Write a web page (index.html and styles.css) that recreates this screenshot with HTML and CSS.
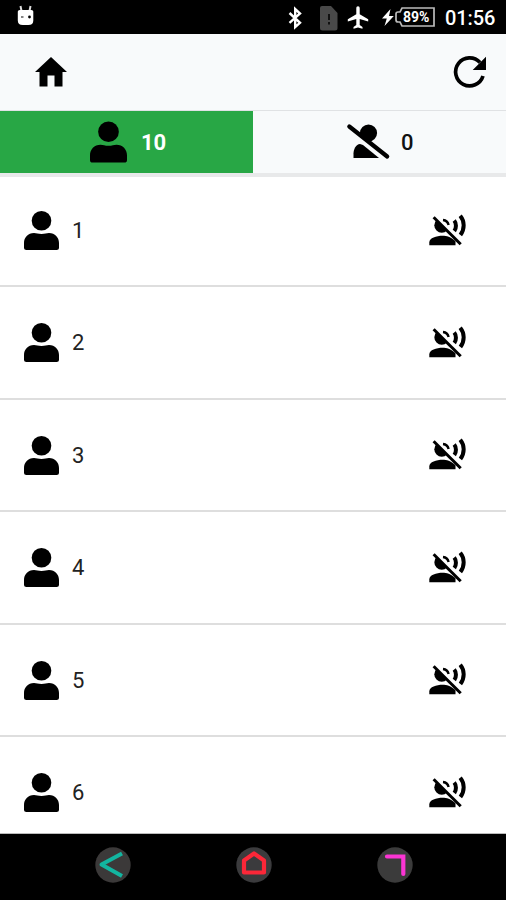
FILE: index.html
```html
<!DOCTYPE html>
<html lang="en">
<head>
<meta charset="utf-8">
<title>Participants</title>
<link rel="stylesheet" href="styles.css">
</head>
<body>
<svg class="symbols" aria-hidden="true">
  <symbol id="person" viewBox="0 0 35 39">
    <circle cx="17.5" cy="9.8" r="9.8"/>
    <path d="M10 22c2.500 0 4 1 7.500 1s5-1 7.500-1c6 0 10 4.500 10 10v4.500q0 2.500-2.500 2.500h-30q-2.500 0-2.500-2.500v-4.500c0-5.500 4-10 10-10z"/>
  </symbol>
  <symbol id="muted" viewBox="0 0 38 34">
    <path d="M7.500 6 18 16.500A7.200 7.200 0 0 1 7.500 6z"/>
    <path d="M14 6c2.800.3 5 2.300 5.600 5" class="stroke-thin"/>
    <path d="M.3 31.300v-2.800c0-4.500 7-6.700 13.500-6.700 3.500 0 8 .8 12.700 5.500v4z"/>
    <path d="M4.600 3.300 31.700 30.300" class="stroke-slash"/>
    <path d="M25.200 6.500c2.300 2.800 2.300 7.500.1 10.500" class="stroke-wave"/>
    <path d="M31.200 1.700c4.600 5.500 4.600 13.300.2 19.300" class="stroke-wave"/>
  </symbol>
</svg>
<div class="screen">
  <div class="status">
    <svg class="robot" viewBox="0 0 18 22"><path d="M3.500 1l1 5M13.500 1l-1 5" stroke="#ddd" stroke-width="2"/><path d="M.8 6.500q0-1.500 2-1.500h11.500q2 0 2 1.500v9q0 4.500-5 4.500H5.800q-5 0-5-4.500z" fill="#fff"/><path d="M4 12h2.500" stroke="#777" stroke-width="1.800"/><circle cx="12.500" cy="12" r="1.400"/></svg>
    <svg class="bluetooth" viewBox="0 0 14 22"><path d="M1.500 6 12 15.800 7.200 20V2L12 6.500 1.500 15.800" fill="none" stroke="#fff" stroke-width="2.400"/></svg>
    <svg class="sim" viewBox="0 0 18 25"><path d="M2 0h9l6.500 7v15q0 2.500-2.500 2.500H2.500Q0 24.500 0 22V2Q0 0 2 0z" fill="#494949"/><path d="M9 8v6M9 16v2.500" stroke="#111" stroke-width="2"/></svg>
    <svg class="plane" viewBox="0 0 22 23"><path d="M11 .3c1.100 0 1.700.9 1.700 2v6l8.500 4.900v2.300l-8.500-2.500v6l2.800 2v1.700L11 21.600l-4.500 1.100V21l2.800-2v-6L.8 15.500v-2.300l8.500-4.900v-6c0-1.100.6-2 1.700-2z" fill="#fff"/></svg>
    <svg class="bolt" viewBox="0 0 12 17"><path d="M8.500 0 0 9.500h4.800L2.500 17 11.800 7H7z" fill="#fff"/></svg>
    <span class="battery"><svg viewBox="0 0 40 20"><path d="M7 1h32v18H7l-2-4H3q-2 0-2-2V7q0-2 2-2h2z" fill="none" stroke="#bbb" stroke-width="1.700"/></svg><b>89%</b></span>
    <span class="clock">01:56</span>
  </div>
  <header>
    <svg class="home" viewBox="0 0 32 30"><path d="M16 0 32 15h-4.500v14.500h-8V18.500h-7v11h-8V15H0z"/></svg>
    <svg class="reload" viewBox="0 0 33 33"><path d="M26 6.500A14 14 0 1 0 29 20" fill="none" stroke="#000" stroke-width="3.700"/><path d="M32 .7V14H18.700l4.500-4.500 2-2z"/></svg>
  </header>
  <div class="tabs">
    <div class="tab active"><svg class="tab-person"><use href="#person"/></svg><span>10</span></div>
    <div class="tab"><svg class="person-off" viewBox="0 0 42 36"><circle cx="21.500" cy="9" r="8.600"/><path d="M6.500 34v-4.500c0-4.500 2.500-9 6.500-9.500l3 1L32 34z"/><path d="M2 6.200 37.500 34.500" stroke="#f8fafb" stroke-width="4"/><path d="M2.300 2.500 40.200 32.500" stroke="#000" stroke-width="4.200" stroke-linecap="round"/></svg><span>0</span></div>
  </div>
  <main>
    <div class="row"><svg class="avatar"><use href="#person"/></svg><span>1</span><svg class="voice"><use href="#muted"/></svg></div>
    <div class="row"><svg class="avatar"><use href="#person"/></svg><span>2</span><svg class="voice"><use href="#muted"/></svg></div>
    <div class="row"><svg class="avatar"><use href="#person"/></svg><span>3</span><svg class="voice"><use href="#muted"/></svg></div>
    <div class="row"><svg class="avatar"><use href="#person"/></svg><span>4</span><svg class="voice"><use href="#muted"/></svg></div>
    <div class="row"><svg class="avatar"><use href="#person"/></svg><span>5</span><svg class="voice"><use href="#muted"/></svg></div>
    <div class="row"><svg class="avatar"><use href="#person"/></svg><span>6</span><svg class="voice"><use href="#muted"/></svg></div>
  </main>
  <nav>
    <svg viewBox="0 0 36 36"><circle cx="18" cy="18" r="17.700" fill="#3b3939"/><path d="M27 6.500 6.500 17.500 27 29" fill="none" stroke="#13b5a0" stroke-width="4" stroke-linejoin="round"/></svg>
    <svg viewBox="0 0 36 36"><circle cx="18" cy="18" r="17.700" fill="#3b3b3d"/><path d="M8 25.500V13.500L18 6.500l10 7v12z" fill="none" stroke="#fb2738" stroke-width="4.200" stroke-linejoin="round"/></svg>
    <svg viewBox="0 0 36 36"><circle cx="18" cy="18" r="17.700" fill="#3b3b3b"/><path d="M10 9.500H26.300V27" fill="none" stroke="#fb35d4" stroke-width="4.200" stroke-linecap="round"/></svg>
  </nav>
</div>
</body>
</html>
```
FILE: styles.css
```css
* { box-sizing: border-box; }
body { margin: 0; font-family: Roboto, sans-serif; color: #111; background: #000; }
svg { display: block; flex: none; overflow: visible; }
.symbols { position: absolute; width: 0; height: 0; }
.screen { width: 506px; height: 900px; display: flex; flex-direction: column; overflow: hidden; }
.status { height: 34px; flex: none; display: flex; align-items: center; background: #000; color: #fff; }
.robot { width: 18px; height: 22px; margin: -2px 0 0 17px; }
.bluetooth { width: 14px; height: 22px; margin-left: 253px; margin-top: 1px; }
.sim { width: 18px; height: 25px; margin: 2px 0 0 18px; }
.plane { width: 22px; height: 23px; margin-left: 9px; }
.bolt { width: 12px; height: 17px; margin-left: 13px; margin-right: 1px; }
.battery { width: 40px; height: 20px; display: grid; align-items: center; }
.battery svg { width: 40px; height: 20px; grid-area: 1 / 1; }
.battery b { grid-area: 1 / 1; padding-left: 8px; font-size: 14px; line-height: 20px; letter-spacing: 0; }
.clock { margin: 2px 0 0 10px; font-size: 20px; font-weight: 500; line-height: 24px; letter-spacing: -0.1px; }
header { height: 78px; flex: none; display: flex; align-items: center; justify-content: space-between; padding: 0 19px 0 35px; background: #f8fafb; border-bottom: 2px solid #e0e2e4; }
.home { width: 32px; height: 30px; }
.reload { width: 33px; height: 33px; }
.tabs { height: 66px; flex: none; display: grid; grid-template-columns: 253px 1fr; background: #f8fafb; border-bottom: 4px solid #e8e9ea; margin-top: -1px; }
.tab { display: flex; align-items: center; font-size: 22px; line-height: 26px; font-weight: 500; }
.tab span { padding-top: 1px; }
.active { background: #28a745; color: #fff; font-weight: 700; padding-left: 90px; gap: 14px; }
.tab:last-child { padding-left: 94px; gap: 12px; }
.tab-person { width: 37px; height: 42px; }
.person-off { width: 42px; height: 36px; }
main { flex: 1; min-height: 0; overflow: hidden; background: #fff; border-bottom: 1px solid #bbb; }
.row { height: 112.5px; display: flex; align-items: center; padding: 0 39px 0 24px; border-bottom: 2px solid #dedede; }
.row:first-child { height: 110.3px; }
.avatar { width: 35px; height: 39px; }
.row span { margin-left: 13px; padding-top: 1px; font-size: 22px; font-weight: 400; line-height: 26px; color: #222; }
.row:first-child > * { margin-top: -1px; }
.voice { width: 38px; height: 34px; margin-left: auto; }
.stroke-thin, .stroke-slash, .stroke-wave { fill: none; stroke: #000; }
.stroke-thin { stroke-width: 2.4; }
.stroke-slash { stroke-width: 3; }
.stroke-wave { stroke-width: 4; }
nav { height: 66px; flex: none; display: flex; gap: 105px; padding: 13px 0 0 95px; background: #000; }
nav svg { width: 36px; height: 36px; }
```
